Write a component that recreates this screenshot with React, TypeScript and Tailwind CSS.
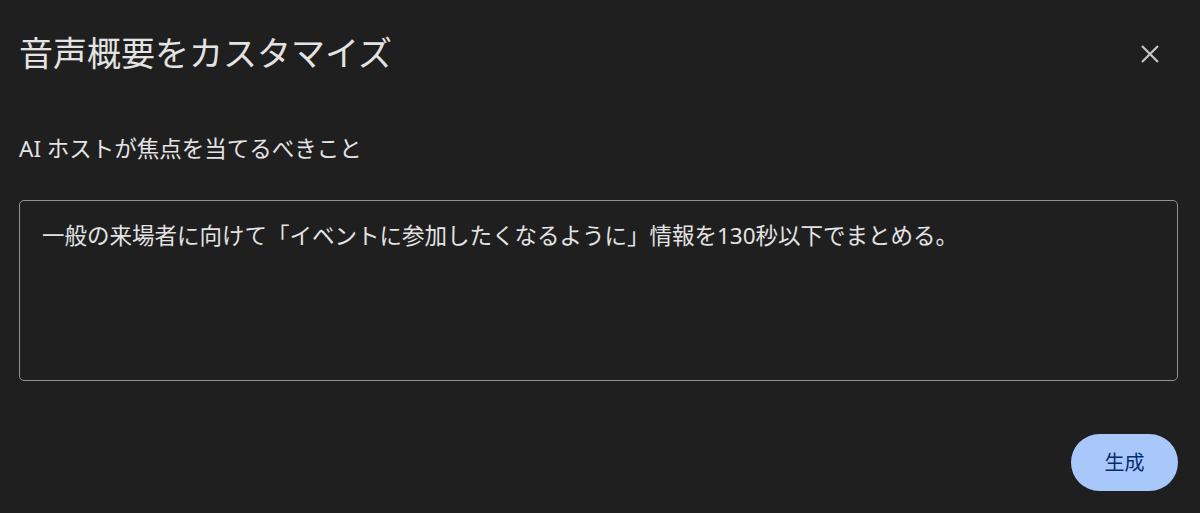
const font = { fontFamily: '"Noto Sans", "Noto Sans CJK JP", sans-serif' };

export default function App() {
  return (
    <div
      className="w-[1200px] h-[513px] bg-[#1f1f1f] text-[#e3e3e3] flex flex-col pl-[19px] pr-[22px] pt-[29px]"
      style={font}
    >
      <div className="flex items-start justify-between">
        <h1 className="text-[34px] leading-[48px]">音声概要をカスタマイズ</h1>
        <button className="mt-[15px] mr-[18px] text-[#c4c7c5]" aria-label="閉じる">
          <svg width="20" height="20" viewBox="0 0 20 20" fill="none" stroke="currentColor" strokeWidth="2.2">
            <path d="M2 2 L18 18 M18 2 L2 18" />
          </svg>
        </button>
      </div>

      <label className="mt-[57px] text-[22.5px] leading-[30px]">AI ホストが焦点を当てるべきこと</label>

      <div className="mt-[36px] h-[181px] rounded-[5px] border border-[#8e918f] px-[22px] pt-[19px]">
        <p className="text-[22.5px] leading-[32px] text-[#e3e3e3]">
          一般の来場者に向けて「イベントに参加したくなるように」情報を130秒以下でまとめる。
        </p>
      </div>

      <div className="mt-[53px] flex justify-end">
        <button className="h-[57px] w-[107px] rounded-full bg-[#a8c7fa] text-[#062e6f] text-[20px]">
          生成
        </button>
      </div>
    </div>
  );
}
